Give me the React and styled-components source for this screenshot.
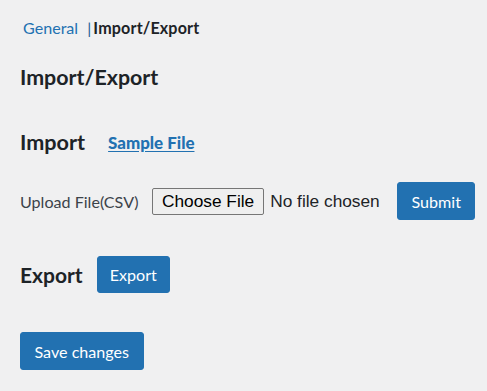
import React from 'react'
import styled, { createGlobalStyle } from 'styled-components'

const GlobalStyle = createGlobalStyle`
  body {
    margin: 0;
    background: #f0f0f1;
    font-family: Lato, 'Open Sans', sans-serif;
    color: #3c434a;
  }
`

const Page = styled.div`
  padding: 16px 20px 20px 20px;
  width: 487px;
  box-sizing: border-box;
`

const Breadcrumb = styled.div`
  display: flex;
  align-items: center;
  font-size: 16.1px;
  padding-left: 3px;
  height: 22px;
`

const Crumb = styled.a`
  color: #2271b1;
  text-decoration: none;
  margin-right: 9px;
`

const Current = styled.span`
  color: #1d2327;
  font-weight: 700;
  letter-spacing: 0.15px;
  &::before {
    content: '|';
    color: #1f5f95;
    font-weight: 400;
    margin-right: 2px;
  }
`

const PageTitle = styled.h1`
  margin: 27px 0 0 0;
  font-size: 21.4px;
  font-weight: 700;
  color: #1d2327;
  line-height: 24px;
`

const SectionRow = styled.div`
  display: flex;
  align-items: center;
  gap: ${({ gap }) => gap || '15px'};
  margin-top: ${({ top }) => top || '0'};
`

const SectionTitle = styled.h2`
  margin: 0;
  font-size: ${({ size }) => size || '21px'};
  font-weight: 700;
  color: #1d2327;
  line-height: 24px;
`

const SampleLink = styled.a`
  color: #2271b1;
  font-weight: 900;
  font-size: 16.9px;
  text-decoration: underline;
  text-underline-offset: 2px;
  margin-top: 1px;
`

const UploadRow = styled.div`
  display: flex;
  align-items: center;
  margin-top: 28px;
`

const Label = styled.label`
  font-size: 16.1px;
  color: #3c434a;
  width: 132px;
  flex-shrink: 0;
`

const FileInput = styled.input`
  font-family: 'Liberation Sans', Arial, sans-serif;
  font-size: 17.3px;
  color: #1d2327;
  width: 245px;
  margin: 0;
  &::file-selector-button {
    font-family: 'Liberation Sans', Arial, sans-serif;
    font-size: 17.3px;
    height: 27px;
    padding: 0 9px;
    margin-right: 6px;
    background: #efefef;
    border: 1px solid #767676;
    border-radius: 2px;
    color: #000;
  }
`

const Button = styled.button`
  background: #2271b1;
  border: 1px solid #2271b1;
  border-radius: 3px;
  color: #fff;
  font-family: Lato, 'Open Sans', sans-serif;
  font-size: 16.1px;
  height: ${({ tall }) => tall || '38px'};
  padding: 0 ${({ pad }) => pad || '12px'};
  cursor: pointer;
`

const Footer = styled.div`
  margin-top: 39px;
`

export default function App() {
  return (
    <>
      <GlobalStyle />
      <Page>
        <Breadcrumb>
          <Crumb href="#">General</Crumb>
          <Current>Import/Export</Current>
        </Breadcrumb>
        <PageTitle>Import/Export</PageTitle>
        <SectionRow top="41px" gap="23px">
          <SectionTitle size="21.6px">Import</SectionTitle>
          <SampleLink href="#">Sample File</SampleLink>
        </SectionRow>
        <UploadRow>
          <Label>Upload File(CSV)</Label>
          <FileInput type="file" accept=".csv" />
          <Button pad="13.5px">Submit</Button>
        </UploadRow>
        <SectionRow top="36px" gap="14px">
          <SectionTitle>Export</SectionTitle>
          <Button pad="12px" tall="37px">Export</Button>
        </SectionRow>
        <Footer>
          <Button pad="13.5px">Save changes</Button>
        </Footer>
      </Page>
    </>
  )
}
